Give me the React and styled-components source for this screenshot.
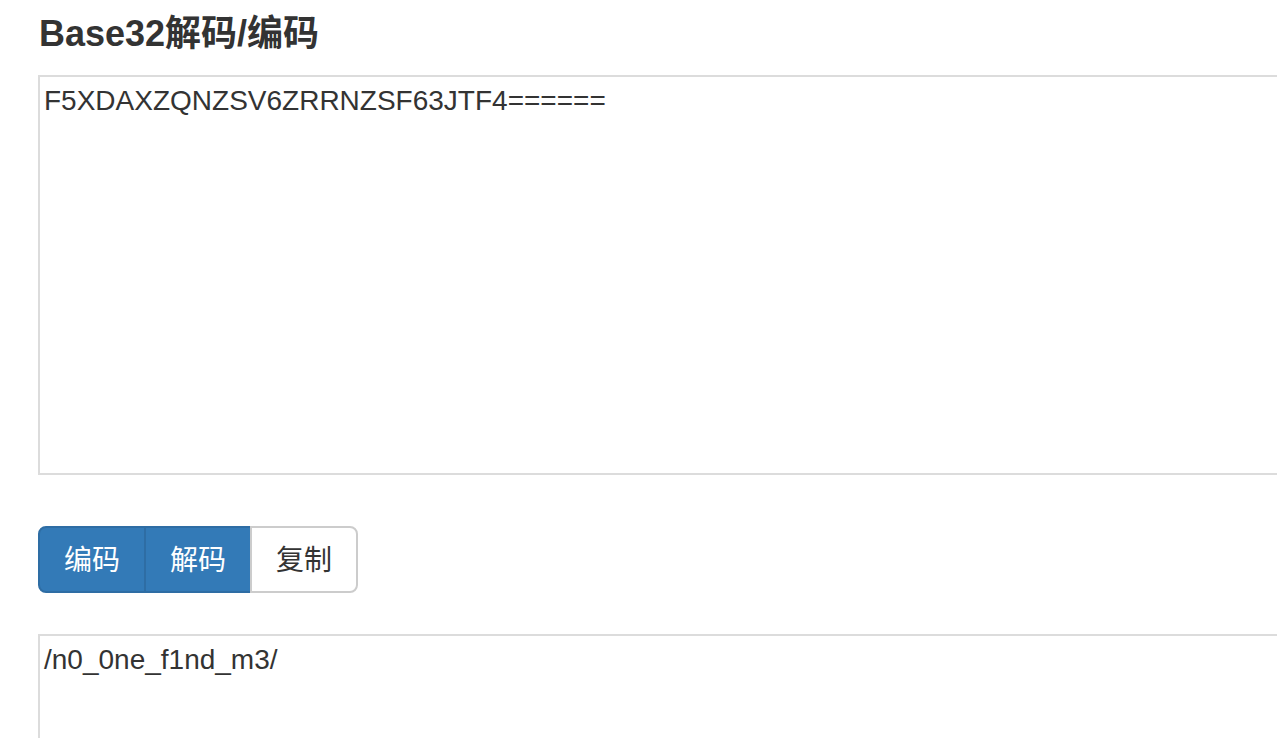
import React, { useState } from "react";
import styled, { createGlobalStyle } from "styled-components";

const GlobalStyle = createGlobalStyle`
  html, body {
    margin: 0;
    padding: 0;
    background: #fff;
    overflow: hidden;
  }
  body {
    font-family: "Liberation Sans", Arial, "Noto Sans CJK SC", sans-serif;
    color: #333;
  }
`;

const Page = styled.div`
  width: 1300px;
  padding: 14px 0 0 38px;
`;

const Title = styled.h4`
  margin: 0 0 21px 1px;
  font-size: 36px;
  line-height: 1.1;
  font-weight: 700;
  color: #333;
  font-family: "Liberation Sans", Arial, "Noto Sans CJK SC", sans-serif;
`;

const Box = styled.textarea`
  display: block;
  box-sizing: border-box;
  width: 1262px;
  height: ${({ h }) => h};
  margin: 0;
  padding: 4px;
  border: 2px solid #dcdcdc;
  border-radius: 0;
  outline: none;
  resize: none;
  font-family: "Liberation Sans", Arial, "Noto Sans CJK SC", sans-serif;
  font-size: 28px;
  line-height: 40px;
  color: #333;
  background: #fff;
`;

const Group = styled.div`
  display: flex;
  margin: 51px 0 41px;
`;

const Btn = styled.button`
  box-sizing: border-box;
  height: 67px;
  padding: 3px 24px 0;
  margin: 0;
  margin-left: ${({ $first }) => ($first ? "0" : "-2px")};
  white-space: nowrap;
  font-family: "Liberation Sans", Arial, "Noto Sans CJK SC", sans-serif;
  font-size: 28px;
  line-height: 40px;
  cursor: pointer;
  border: 2px solid ${({ $primary }) => ($primary ? "#2e6da4" : "#ccc")};
  background: ${({ $primary }) => ($primary ? "#337ab7" : "#fff")};
  color: ${({ $primary }) => ($primary ? "#fff" : "#333")};
  border-radius: ${({ $first, $last }) =>
    $first ? "8px 0 0 8px" : $last ? "0 8px 8px 0" : "0"};
`;

export default function App() {
  const [input, setInput] = useState("F5XDAXZQNZSV6ZRRNZSF63JTF4======");
  const [output, setOutput] = useState("/n0_0ne_f1nd_m3/");

  return (
    <>
      <GlobalStyle />
      <Page>
        <Title>Base32解码/编码</Title>
        <Box h="400px" value={input} onChange={(e) => setInput(e.target.value)} />
        <Group>
          <Btn $primary $first>
            编码
          </Btn>
          <Btn $primary>解码</Btn>
          <Btn $last>复制</Btn>
        </Group>
        <Box h="200px" value={output} onChange={(e) => setOutput(e.target.value)} />
      </Page>
    </>
  );
}
